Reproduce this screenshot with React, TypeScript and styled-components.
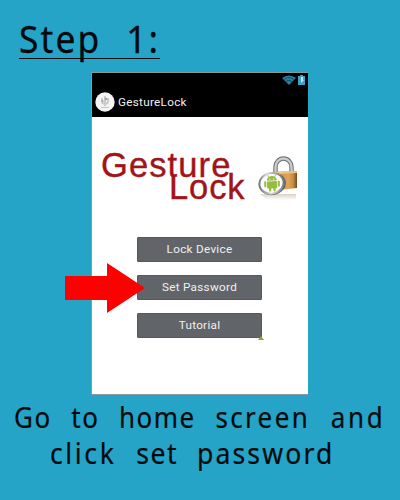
import React from 'react';
import styled, { createGlobalStyle } from 'styled-components';

const GlobalStyle = createGlobalStyle`
  * { box-sizing: border-box; }
  body { margin: 0; background: #25a4c7; }
`;

const Page = styled.main`
  width: 400px;
  height: 500px;
  overflow: hidden;
  display: flex;
  flex-direction: column;
  background: #25a4c7;
  color: #020a0d;
  font-family: 'Noto Sans', sans-serif;
`;

const Heading = styled.h1`
  align-self: flex-start;
  height: 42px;
  margin: 17px 0 13px 19px;
  width: 141px;
  border-bottom: 1px solid #020a0d;
  font-size: 38px;
  font-weight: 400;
  line-height: 42px;
  white-space: nowrap;
`;

const HeadingText = styled.span`
  display: inline-block;
  transform: scaleX(0.93);
  transform-origin: left;
  letter-spacing: 2.3px;
  word-spacing: 14.5px;
  -webkit-text-stroke: 0.3px currentColor;
`;

const Phone = styled.section`
  position: relative;
  width: 217px;
  height: 323px;
  margin-left: 91px;
  display: flex;
  flex-direction: column;
  background: #fff;
  border: 1px solid #8b989c;
  border-right: 0;
  font-family: Roboto, sans-serif;
`;

const TopBar = styled.header`
  height: 44px;
  flex: none;
  background: #000;
  color: #f2f2f2;
`;

const StatusRow = styled.div`
  height: 13px;
  display: flex;
  justify-content: flex-end;
  gap: 2px;
  padding: 2px 3px 0 0;
`;

const TitleRow = styled.div`
  display: flex;
  align-items: center;
  height: 32px;
  padding-left: 3px;
  gap: 3px;
  font-size: 11.7px;
  letter-spacing: 0.3px;
`;

const Brand = styled.div`
  display: flex;
  height: 82px;
  margin-top: 24px;
  padding-left: 9px;
  gap: 11px;
`;

const Wordmark = styled.div`
  width: 146px;
  padding-top: 13px;
  color: #a11419;
  font-family: 'Liberation Sans', sans-serif;
  font-size: 34.5px;
  line-height: 22px;
  white-space: nowrap;
  -webkit-text-stroke: 0.4px currentColor;
`;

const WordLine = styled.div<{ $indent?: number; $spacing: number }>`
  padding-left: ${(p) => p.$indent ?? 0}px;
  letter-spacing: ${(p) => p.$spacing}px;
`;

const Menu = styled.nav`
  display: flex;
  flex-direction: column;
  gap: 13px;
  width: 125px;
  margin: 14px 0 0 45px;
`;

const MenuButton = styled.button`
  height: 25px;
  padding: 0 0 1px;
  border: 1px solid #56595c;
  border-radius: 1px;
  background: #616569;
  color: #f0f0f0;
  font: 11.7px Roboto, sans-serif;
  letter-spacing: 0.3px;
`;

const Pointer = styled.svg`
  position: absolute;
  left: -27px;
  top: 190px;
`;

const Marker = styled.svg`
  position: absolute;
  left: 166px;
  top: 263px;
`;

const Caption = styled.div`
  padding-top: 4px;
  font-size: 29.5px;
  line-height: 36px;
  white-space: nowrap;
  -webkit-text-stroke: 0.2px currentColor;
`;

const CaptionLine = styled.div<{ $indent: number; $gap: number; $stretch: number }>`
  width: max-content;
  margin-left: ${(p) => p.$indent}px;
  word-spacing: ${(p) => p.$gap}px;
  transform: scaleX(${(p) => p.$stretch});
  transform-origin: left;
`;

const Word = styled.span<{ $track: number }>`
  letter-spacing: ${(p) => p.$track}px;
`;

const WifiIcon = () => (
  <svg width="14" height="10" viewBox="0 0 14 10">
    <path d="M0 3Q7-2 14 3L7 10Z" fill="#2b7fa5" />
    <path d="M2 4.4Q7 1 12 4.4M4 6.4Q7 4.4 10 6.4" fill="none" stroke="#123b50" strokeWidth=".8" />
  </svg>
);

const BatteryIcon = () => (
  <svg width="7" height="10" viewBox="0 0 7 10">
    <path d="M2 0h3v1h2v9H0V1h2Z" fill="#3f9fc4" />
    <path d="M3 2h2v3h1L3 8Z" fill="#bdeaf8" />
  </svg>
);

const AppIcon = () => (
  <svg width="20" height="20" viewBox="0 0 20 20">
    <circle cx="10" cy="10" r="9.7" fill="#f4f4f4" />
    <g fill="none" stroke="#c8c8c8">
      <path d="M7 6v4.500q3 3 6 0V6M10 4v10" strokeWidth="1.8" />
      <path d="M6 15.500h8" strokeWidth="1.2" />
    </g>
    <circle cx="11" cy="7" r="1.3" fill="#a2a2a2" />
    <circle cx="7.500" cy="9" r="1.2" fill="#b0b0b0" />
  </svg>
);

const PadlockArt = () => (
  <svg width="40" height="50" viewBox="0 0 40 50">
    <defs>
      <linearGradient id="brass" x2="1">
        <stop stopColor="#b87f38" />
        <stop offset=".65" stopColor="#dda45b" />
        <stop offset=".85" stopColor="#c68b42" />
        <stop offset="1" stopColor="#76451d" />
      </linearGradient>
      <linearGradient id="steel" x2="1">
        <stop stopColor="#737779" />
        <stop offset=".4" stopColor="#d9dddd" />
        <stop offset="1" stopColor="#71777b" />
      </linearGradient>
      <linearGradient id="shade" x2="0" y2="1">
        <stop stopColor="#c8b9a5" />
        <stop offset="1" stopColor="#fff" />
      </linearGradient>
    </defs>
    <path d="M2 38h36v6H10Z" fill="url(#shade)" opacity=".65" />
    <path d="M17.500 18V11a8 8.500 0 0 1 16 0v6" fill="none" stroke="#6b7073" strokeWidth="4.4" />
    <path d="M17.500 18V11a8 8.500 0 0 1 16 0v6" fill="none" stroke="#c9cdce" strokeWidth="2.4" />
    <path d="M14 16 39 15V32l-13 1.500-12-2Z" fill="url(#brass)" />
    <path d="M14 16 39 15v2L14 18.500Z" fill="#edc47d" />
    <ellipse cx="14.500" cy="28" rx="13.500" ry="11" fill="#5f6669" transform="rotate(-12 14.500 28)" />
    <ellipse cx="13.500" cy="27.300" rx="12.200" ry="10.300" fill="#fafafa" stroke="url(#steel)" strokeWidth="2" transform="rotate(-12 13.500 27.300)" />
    <g fill="#96bd3e" transform="translate(14 27) rotate(-3)">
      <path d="M-5-2.500a5 4.600 0 0 1 10 0Z" />
      <path d="M-4-8-2.500-5M4-8 2.500-5" stroke="#96bd3e" strokeWidth=".8" />
      <rect x="-5" y="-1.800" width="10" height="7.200" rx="1" />
      <rect x="-7.800" y="-2" width="2" height="6" rx="1" />
      <rect x="5.800" y="-2" width="2" height="6" rx="1" />
      <rect x="-3.300" y="4" width="2.200" height="4.500" rx="1" />
      <rect x="1.100" y="4" width="2.200" height="4.500" rx="1" />
      <circle cx="-2" cy="-4" r=".6" fill="#fff" />
      <circle cx="2" cy="-4" r=".6" fill="#fff" />
    </g>
  </svg>
);

const ArtSlot = styled.div`
  padding-top: 15px;
`;

export default function App() {
  return (
    <>
      <GlobalStyle />
      <Page>
        <Heading>
          <HeadingText>Step 1:</HeadingText>
        </Heading>
        <Phone>
          <TopBar>
            <StatusRow>
              <WifiIcon />
              <BatteryIcon />
            </StatusRow>
            <TitleRow>
              <AppIcon />
              <span>GestureLock</span>
            </TitleRow>
          </TopBar>
          <Brand>
            <Wordmark>
              <WordLine $spacing={1.1}>Gesture</WordLine>
              <WordLine $indent={68} $spacing={0.9}>Lock</WordLine>
            </Wordmark>
            <ArtSlot>
              <PadlockArt />
            </ArtSlot>
          </Brand>
          <Menu>
            <MenuButton>Lock Device</MenuButton>
            <MenuButton>Set Password</MenuButton>
            <MenuButton>Tutorial</MenuButton>
          </Menu>
          <Pointer width="80" height="50" viewBox="0 0 80 50">
            <path d="M0 13h42V0l38 25-38 25V37H0Z" fill="#f00" />
          </Pointer>
          <Marker width="6" height="4" viewBox="0 0 6 4">
            <path d="M0 4 3 0l3 4Z" fill="#a69a35" />
          </Marker>
        </Phone>
        <Caption>
          <CaptionLine $indent={14} $gap={13} $stretch={0.88}>
            <Word $track={1.7}>Go to home </Word>
            <Word $track={2.7}>screen </Word>
            <Word $track={3.2}>and</Word>
          </CaptionLine>
          <CaptionLine $indent={50} $gap={11.5} $stretch={0.9}>
            <Word $track={2.9}>click </Word>
            <Word $track={1.7}>set </Word>
            <Word $track={2.4}>password</Word>
          </CaptionLine>
        </Caption>
      </Page>
    </>
  );
}
